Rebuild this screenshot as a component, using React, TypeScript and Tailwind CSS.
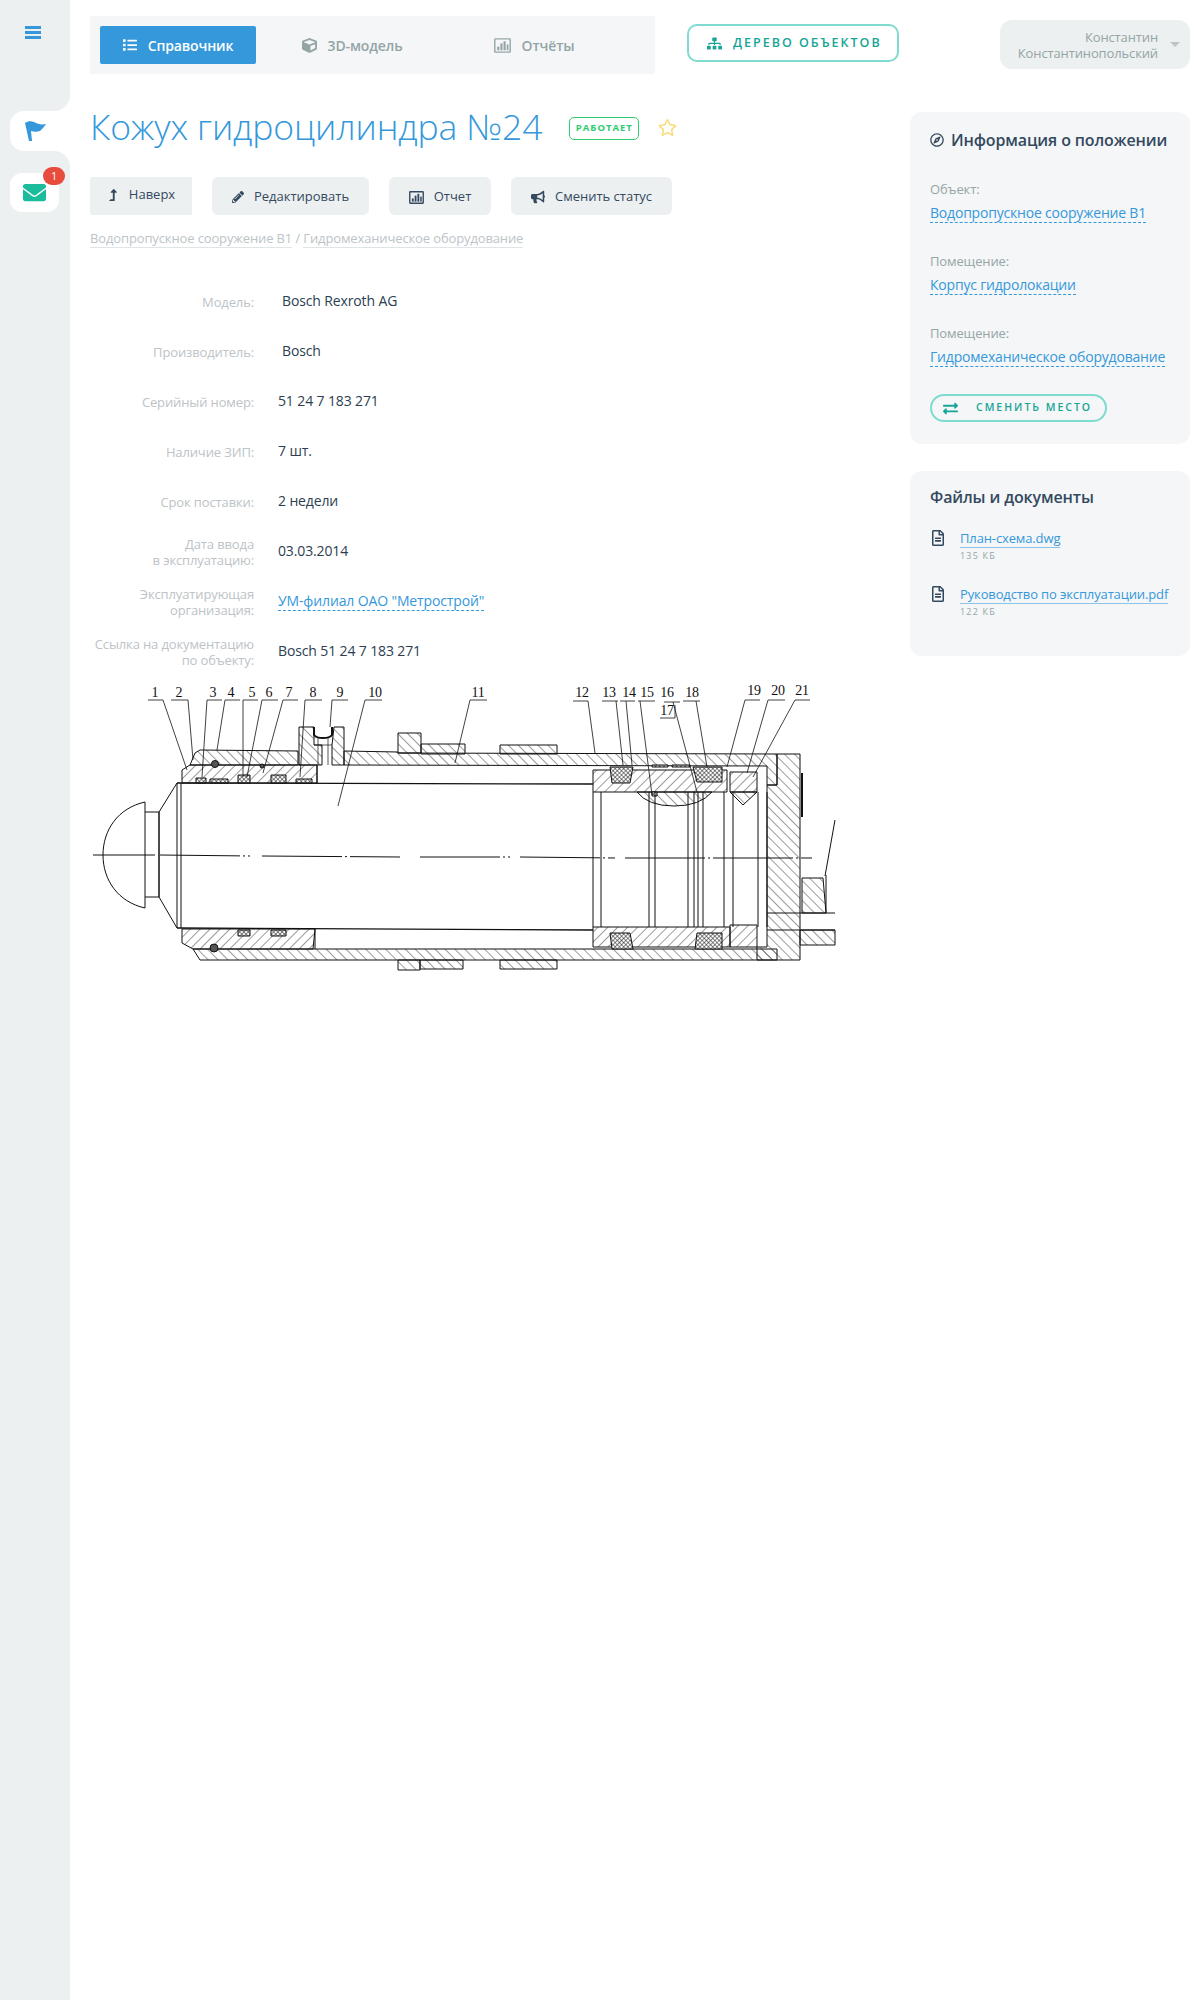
import { ReactNode } from "react";
import {
  FaBullhorn,
  FaCube,
  FaEnvelope,
  FaExchangeAlt,
  FaLevelUpAlt,
  FaList,
  FaPencilAlt,
  FaRegCompass,
  FaRegFileAlt,
  FaRegStar,
  FaSitemap,
} from "react-icons/fa";

const ChartIcon = ({ size, bold }: { size: number; bold?: boolean }) => (
  <svg width={size} height={size - 2} viewBox="0 0 16 14" fill="currentColor">
    <rect x="0.75" y="0.75" width="14.5" height="12.5" fill="none" stroke="currentColor" strokeWidth={bold ? 1.5 : 1.3} rx="0.5" />
    <rect x="3" y="8" width="2" height="3.5" />
    <rect x="6" y="5" width="2" height="6.5" />
    <rect x="9" y="3" width="2" height="8.5" />
    <rect x="12" y="6" width="1.6" height="5.5" />
  </svg>
);

const Sidebar = () => (
  <div className="w-[70px] shrink-0 h-[2000px] flex flex-col">
    <div className="h-[111px] bg-[#ecf0f1] rounded-br-[16px] pt-[26px] pl-[25px]">
      <svg width="16" height="13" viewBox="0 0 16 13" fill="#3498db">
        <rect width="16" height="3" />
        <rect y="5" width="16" height="3" />
        <rect y="10" width="16" height="3" />
      </svg>
    </div>
    <div className="h-[40px] bg-[#ecf0f1]">
      <div className="h-full ml-[10px] bg-white rounded-l-[14px] flex items-center pl-[15px]">
        <svg width="21" height="20" viewBox="0 0 21 20" fill="#3498db">
          <path d="M0 2 C3 0 6 0 9 1 C13 3 16 4 21 3 C19 6 17 8 15 10 C12 11 9 11 6 10 L7 20 H4 Z" />
        </svg>
      </div>
    </div>
    <div className="flex-1 bg-[#ecf0f1] rounded-tr-[16px] pt-[22px] pl-[10px]">
      <div className="relative w-[49px] h-[39px] bg-white rounded-[12px] flex items-center justify-center text-[#1abc9c]">
        <FaEnvelope size={23} />
        <span className="absolute right-[-6px] top-[-6px] w-[22px] h-[18px] bg-[#e74c3c] rounded-[9px] text-white text-[11px] leading-[18px] text-center">
          1
        </span>
      </div>
    </div>
  </div>
);

const Tab = ({ icon, label, active, className }: { icon: ReactNode; label: string; active?: boolean; className?: string }) => (
  <div
    className={`w-[156px] h-[38px] font-semibold flex items-center justify-center gap-[11px] text-[14px] ${className ?? ""} ${
      active ? "rounded-[2px] bg-[#3498db] text-white" : "text-[#95a5a6]"
    }`}
  >
    {icon}
    {label}
  </div>
);

const ActionButton = ({ icon, label, className }: { icon: ReactNode; label: string; className: string }) => (
  <div className={`${className} h-[38px] bg-[#ecf0f1] flex items-center justify-center gap-[10px] text-[13px] tracking-normal text-[#34495e]`}>
    {icon}
    {label}
  </div>
);

const rows: { label: ReactNode; value: ReactNode; shift?: boolean }[] = [
  { label: "Модель:", value: "Bosch Rexroth AG", shift: true },
  { label: "Производитель:", value: "Bosch", shift: true },
  { label: "Серийный номер:", value: "51 24 7 183 271" },
  { label: "Наличие ЗИП:", value: "7 шт." },
  { label: "Срок поставки:", value: "2 недели" },
  {
    label: (
      <>
        Дата ввода
        <br />в эксплуатацию:
      </>
    ),
    value: "03.03.2014",
  },
  {
    label: (
      <>
        Эксплуатирующая
        <br />
        организация:
      </>
    ),
    value: (
      <span className="text-[#3498db] border-b border-dashed border-[#3498db]">УМ-филиал ОАО "Метрострой"</span>
    ),
  },
  {
    label: (
      <>
        Ссылка на документацию
        <br />
        по объекту:
      </>
    ),
    value: "Bosch 51 24 7 183 271",
  },
];

const labels: [string, number, number][] = [
  ["1", 155, 697], ["2", 179, 697], ["3", 213, 697], ["4", 231, 697], ["5", 252, 697], ["6", 269, 697],
  ["7", 289, 697], ["8", 313, 697], ["9", 340, 697], ["10", 375, 697], ["11", 478, 697], ["12", 582, 697],
  ["13", 609, 697], ["14", 629, 697], ["15", 647, 697], ["16", 667, 697], ["17", 667, 715], ["18", 692, 697],
  ["19", 754, 695], ["20", 778, 695], ["21", 802, 695],
];

// leader lines of the drawing: shelf from x1 to x2, then down to the part
const leaders: [number, number, number, number, number, number][] = [
  [148, 163, 700, 163, 187, 770], [171, 188, 700, 188, 193, 760], [207, 222, 700, 207, 202, 777],
  [225, 240, 700, 225, 217, 750], [243, 258, 700, 243, 243, 777], [262, 278, 700, 262, 247, 777],
  [283, 298, 700, 283, 263, 773], [305, 322, 700, 305, 300, 777], [332, 348, 700, 332, 330, 727],
  [365, 382, 700, 365, 338, 806], [470, 487, 700, 470, 455, 763], [573, 588, 701, 588, 595, 753],
  [602, 618, 701, 616, 623, 765], [620, 635, 701, 626, 632, 765], [638, 655, 701, 640, 652, 795],
  [664, 680, 702, 673, 697, 792], [683, 700, 701, 696, 707, 767], [745, 760, 700, 745, 727, 767],
  [768, 785, 700, 768, 747, 773], [795, 810, 700, 795, 753, 777],
];

const hatchBack = [
  "M200 750 L298 751 L298 765 L190 765 L195 753 Z",
  "M344 751 L398 752 L398 753 L777 754 L777 785 L767 785 L767 766 L344 765 Z",
  "M299 727 H314 V745 H322 V765 H299 Z",
  "M334 727 H344 V765 H332 V745 Z",
  "M398 733 H421 V753 H398 Z",
  "M421 744 H465 V754 H421 Z",
  "M500 745 H557 V754 H500 Z",
  "M193 949 H777 V960 H200 Z",
  "M398 960 H420 V970 H398 Z",
  "M420 960 H463 V969 H420 Z",
  "M500 960 H557 V969 H500 Z",
  "M637 792 H712 Q700 806 674 806 Q648 806 637 792 Z",
  "M777 754 H800 V960 H757 V947 H767 V785 H777 Z",
  "M802 878 H823 L826 913 H802 Z",
  "M800 930 H835 V945 H800 Z",
];

const hatchForward = [
  "M182 770 L190 765 H317 V783 H182 Z",
  "M182 929 H315 L313 949 H193 L182 943 Z",
  "M593 770 H727 V792 H593 Z",
  "M593 927 H730 V947 H593 Z",
  "M730 772 H757 V792 H730 Z",
  "M730 925 H757 V947 H730 Z",
];

const seals = [
  "M610 767 H633 L630 783 H612 Z",
  "M693 767 H722 V782 H697 Z",
  "M610 933 H630 L633 949 H612 Z",
  "M697 933 H722 V949 H695 Z",
  "M196 778 H206 V783 H196 Z",
  "M238 775 H250 V783 H238 Z",
  "M271 775 H286 V783 H271 Z",
  "M238 930 H250 V936 H238 Z",
  "M271 930 H286 V936 H271 Z",
  "M652 792 H657 V796 H652 Z",
  "M652 765 H668 V767 H652 Z",
  "M672 765 H690 V767 H672 Z",
  "M210 779 H228 V783 H210 Z",
  "M296 779 H312 V783 H296 Z",
];

const vertical = [593, 601, 649, 655, 688, 694, 698, 703, 724, 733, 758, 767];

const Drawing = () => (
  <svg width="746" height="295" viewBox="90 680 746 295" className="block mt-[4px]">
    <defs>
      <pattern id="hatchBack" width="7" height="7" patternUnits="userSpaceOnUse" patternTransform="rotate(-45)">
        <line x1="0" y1="0" x2="0" y2="7" stroke="#222" strokeWidth="0.9" />
      </pattern>
      <pattern id="hatchForward" width="7" height="7" patternUnits="userSpaceOnUse" patternTransform="rotate(45)">
        <line x1="0" y1="0" x2="0" y2="7" stroke="#222" strokeWidth="0.9" />
      </pattern>
      <pattern id="cross" width="3" height="3" patternUnits="userSpaceOnUse" patternTransform="rotate(45)">
        <rect width="3" height="3" fill="#fff" />
        <path d="M0 0H3M0 0V3" stroke="#111" strokeWidth="1" />
      </pattern>
    </defs>
    <g fill="none" stroke="#111" strokeWidth="1">
      {hatchBack.map((d) => (
        <path key={d} d={d} fill="url(#hatchBack)" />
      ))}
      {hatchForward.map((d) => (
        <path key={d} d={d} fill="url(#hatchForward)" />
      ))}
      {seals.map((d) => (
        <path key={d} d={d} fill="url(#cross)" />
      ))}
      <path d="M145 802 C118 808 103 830 103 855 C103 880 118 902 145 908 Z" />
      <path d="M145 812 H159 V897 H145" />
      <path d="M159 812 L177 783 V928 L159 897 Z" />
      <path d="M181 783 V928" />
      <path d="M177 783 L593 784 M177 928 L593 930" strokeWidth="1.3" />
      <path d="M317 765 V783 M315 929 V949" />
      {vertical.map((x) => (
        <line key={x} x1={x} y1="792" x2={x} y2="927" />
      ))}
      <path d="M730 792 L757 792 L743 805 Z" fill="url(#hatchBack)" />
      <path d="M767 913 H835 M767 930 H835 M826 875 V913 M835 820 L825 876" />
      <path d="M802 773 V817" strokeWidth="2" />
      <path d="M93 855 L155 855 M160 855 L250 856 M262 856 L400 857 M420 857 L510 857 M520 857 L615 858 M625 858 L812 858" strokeDasharray="80 3 2 3" />
      <circle cx="215" cy="764" r="3.5" fill="#555" />
      <circle cx="214" cy="948" r="4" fill="#555" />
      <circle cx="262" cy="766" r="2" fill="#555" />
      <path d="M314 727 V735 Q316 738 323 738 Q330 738 332 735 V727" strokeWidth="2" />
      <path d="M314 745 H332 M318 738 V765 M328 738 V765" strokeWidth="0.7" />
      {leaders.map(([x1, x2, y, sx, ex, ey]) => (
        <g key={`${x1}-${y}`} strokeWidth="0.8">
          <line x1={x1} y1={y} x2={x2} y2={y} />
          <line x1={sx} y1={y} x2={ex} y2={ey} />
        </g>
      ))}
      <path d="M660 718 H675 V705" strokeWidth="0.8" />
    </g>
    {labels.map(([text, x, y]) => (
      <text key={text} x={x} y={y} textAnchor="middle" fontSize="14" fontFamily="'Liberation Serif', serif" fill="#111">
        {text}
      </text>
    ))}
  </svg>
);

const Place = ({ label, value }: { label: string; value: string }) => (
  <div className="h-[72px]">
    <div className="text-[13px] leading-[18px] text-[#95a5a6]">{label}</div>
    <div className="mt-[6px] text-[14px] leading-[18px] tracking-[-0.2px] whitespace-nowrap">
      <span className="text-[#3498db] border-b border-dashed border-[#3498db]">{value}</span>
    </div>
  </div>
);

const FileItem = ({ name, size }: { name: string; size: string }) => (
  <div className="flex h-[56px]">
    <FaRegFileAlt size={16} className="text-[#34495e] mt-[1px] w-[16px] shrink-0" />
    <div className="ml-[14px]">
      <div className="text-[13px] leading-[18px] whitespace-nowrap">
        <span className="text-[#3498db] border-b border-[#8fc4e8]">{name}</span>
      </div>
      <div className="text-[9px] leading-[12px] mt-[3px] tracking-[1.2px] text-[#95a5a6]">{size}</div>
    </div>
  </div>
);

export default function App() {
  return (
    <div className="flex bg-white font-['Open_Sans',sans-serif] text-[#34495e] tracking-[-0.13px]">
      <Sidebar />
      <div className="flex-1 pl-[20px] pr-[10px]">
        <div className="flex items-start pt-[16px]">
          <div className="w-[565px] h-[58px] bg-[#f4f6f8] rounded-[2px] pl-[10px] flex items-center">
            <Tab active icon={<FaList size={14} />} label="Справочник" />
            <Tab className="ml-[18px]" icon={<FaCube size={15} />} label="3D-модель" />
            <Tab className="ml-[26px]" icon={<ChartIcon size={17} />} label="Отчёты" />
          </div>
          <div className="ml-[32px] mt-[8px] w-[212px] h-[38px] border-2 border-[#7fdbd0] rounded-[10px] flex items-center pl-[18px] gap-[11px] text-[12.5px] font-semibold tracking-[2px] text-[#16a596]">
            <FaSitemap size={15} />
            ДЕРЕВО ОБЪЕКТОВ
          </div>
          <div className="ml-auto mt-[4px] w-[190px] h-[49px] bg-[#ecf0f1] rounded-[12px] flex items-center justify-end pr-[10px] text-[13px] leading-[16px] text-[#95a5a6]">
            <div className="text-right">
              Константин
              <br />
              Константинопольский
            </div>
            <div className="ml-[12px] w-0 h-0 border-x-[5px] border-x-transparent border-t-[5px] border-t-[#bdc3c7]" />
          </div>
        </div>

        <div className="flex justify-between pt-[38px]">
          <div className="w-[746px]">
            <div className="flex items-center h-[31px]">
              <h1 className="text-[35.5px] leading-[31px] font-light text-[#3498db] whitespace-nowrap mt-[-3px]">Кожух гидроцилиндра №24</h1>
              <span className="ml-[27px] mt-[1px] h-[23px] w-[70px] border border-[#2ecc71] rounded-[5px] flex items-center justify-center text-[9.5px] font-bold tracking-[1px] text-[#2ecc71]">
                РАБОТАЕТ
              </span>
              <FaRegStar size={19} className="ml-[19px] text-[#f8dc7c]" />
            </div>
            <div className="flex gap-[20px] mt-[34px]">
              <ActionButton className="w-[102px] rounded-[2px] pb-[2px]" icon={<FaLevelUpAlt size={12} />} label="Наверх" />
              <ActionButton className="w-[157px] rounded-[6px] pt-[2px]" icon={<FaPencilAlt size={12} />} label="Редактировать" />
              <ActionButton className="w-[102px] rounded-[6px] pt-[2px]" icon={<ChartIcon size={15} bold />} label="Отчет" />
              <ActionButton className="w-[161px] rounded-[6px] pt-[2px]" icon={<FaBullhorn size={14} />} label="Сменить статус" />
            </div>
            <div className="mt-[14px] text-[13px] leading-[18px] text-[#bdc3c7]">
              <span className="border-b border-[#dfe4e6]">Водопропускное сооружение В1</span> /{" "}
              <span className="border-b border-[#dfe4e6]">Гидромеханическое оборудование</span>
            </div>
            <div className="mt-[29px]">
              {rows.map((row, i) => (
                <div key={i} className="flex items-center h-[50px]">
                  <div className="w-[164px] text-right text-[13px] leading-[16px] text-[#bdc3c7] pt-[2px]">{row.label}</div>
                  <div className={`${row.shift ? "ml-[28px]" : "ml-[24px]"} mb-[2px] text-[14px] text-[#2c3e50]`}>{row.value}</div>
                </div>
              ))}
            </div>
            <Drawing />
          </div>

          <div className="w-[280px]">
            <div className="h-[332px] bg-[#f4f6f8] rounded-[12px] px-[20px] pt-[16px]">
              <div className="flex items-center gap-[7px] text-[16px] leading-[24px] font-semibold whitespace-nowrap">
                <FaRegCompass size={14} />
                Информация о положении
              </div>
              <div className="mt-[28px]">
                <Place label="Объект:" value="Водопропускное сооружение В1" />
                <Place label="Помещение:" value="Корпус гидролокации" />
                <Place label="Помещение:" value="Гидромеханическое оборудование" />
              </div>
              <div className="mt-[-2px] w-[177px] h-[28px] border-2 border-[#7fdbd0] rounded-[14px] flex items-center pl-[11px] gap-[18px] text-[10.5px] font-semibold tracking-[2px] text-[#16a596]">
                <FaExchangeAlt size={15} />
                СМЕНИТЬ МЕСТО
              </div>
            </div>
            <div className="mt-[27px] h-[185px] bg-[#f4f6f8] rounded-[12px] px-[20px] pt-[14px]">
              <div className="text-[16px] leading-[24px] font-semibold">Файлы и документы</div>
              <div className="mt-[20px]">
                <FileItem name="План-схема.dwg" size="135 КБ" />
                <FileItem name="Руководство по эксплуатации.pdf" size="122 КБ" />
              </div>
            </div>
          </div>
        </div>
      </div>
    </div>
  );
}
